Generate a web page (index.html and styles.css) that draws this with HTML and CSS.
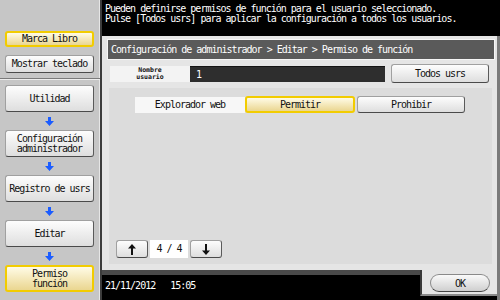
FILE: index.html
```html
<!DOCTYPE html>
<html lang="es">
<head>
    <meta charset="UTF-8">
    <title>Permiso de función</title>
    <link rel="stylesheet" href="styles.css">
</head>
<body>
    <div class="screen">
        <div class="sidebar">
            <div class="side-top">
                <div class="btn btn-yellow short">Marca Libro</div>
                <div class="btn short second">Mostrar teclado</div>
            </div>
            <div class="flow">
                <div class="btn nav">Utilidad</div>
                <div class="flow-arrow"><svg width="9" height="9" viewBox="0 0 9 9"><path d="M3 0h3v4h3L4.5 9 0 4h3z" fill="#1b5cff"/></svg></div>
                <div class="btn nav">Configuración<br>administrador</div>
                <div class="flow-arrow"><svg width="9" height="9" viewBox="0 0 9 9"><path d="M3 0h3v4h3L4.5 9 0 4h3z" fill="#1b5cff"/></svg></div>
                <div class="btn nav">Registro de usrs</div>
                <div class="flow-arrow"><svg width="9" height="9" viewBox="0 0 9 9"><path d="M3 0h3v4h3L4.5 9 0 4h3z" fill="#1b5cff"/></svg></div>
                <div class="btn nav">Editar</div>
                <div class="flow-arrow"><svg width="9" height="9" viewBox="0 0 9 9"><path d="M3 0h3v4h3L4.5 9 0 4h3z" fill="#1b5cff"/></svg></div>
                <div class="btn btn-yellow nav">Permiso<br>función</div>
            </div>
        </div>

        <div class="main">
            <div class="message">
                Pueden definirse permisos de función para el usuario seleccionado.<br>
                Pulse [Todos usrs] para aplicar la configuración a todos los usuarios.
            </div>

            <div class="frame">
                <div class="frame-body">
                    <div class="title-bar">Configuración de administrador &gt; Editar &gt; Permiso de función</div>

                    <div class="name-row">
                        <div class="name-label">Nombre<br>usuario</div>
                        <div class="name-field">1</div>
                        <div class="btn all-btn">Todos usrs</div>
                    </div>

                    <div class="content">
                        <div class="perm-row">
                            <div class="perm-label">Explorador web</div>
                            <div class="btn btn-yellow choice">Permitir</div>
                            <div class="btn choice deny">Prohibir</div>
                        </div>

                        <div class="pager">
                            <div class="btn page-btn">
                                <svg width="10" height="11" viewBox="0 0 10 11"><path d="M4 11V4.5H1L5 0l4 4.5H6V11z" fill="#111"/></svg>
                            </div>
                            <div class="page-count">4 / 4</div>
                            <div class="btn page-btn">
                                <svg width="10" height="11" viewBox="0 0 10 11"><path d="M4 0v6.5H1L5 11l4-4.5H6V0z" fill="#111"/></svg>
                            </div>
                        </div>
                    </div>
                </div>

                <div class="bottom-row">
                    <div class="status">21/11/2012&nbsp;&nbsp;&nbsp;15:05</div>
                    <div class="ok-area">
                        <div class="ok-btn">OK</div>
                    </div>
                </div>
            </div>
        </div>
    </div>
</body>
</html>
```

FILE: styles.css
```css
* {
    margin: 0;
    padding: 0;
    box-sizing: border-box;
}

body {
    font-family: "DejaVu Sans Mono", "Liberation Mono", monospace;
    font-size: 10px;
    line-height: 10px;
    letter-spacing: -1px;
    color: #111;
    background-color: #000;
}

.screen {
    display: flex;
    width: 500px;
    height: 300px;
}

/* left column */
.sidebar {
    width: 102px;
    height: 300px;
    background-color: #c6c6c6;
    border-right: 2px solid #3c3c3c;
    box-shadow: inset -1px 0 #e6e6e6;
}

.side-top {
    padding: 31px 6px 5px 5px;
    border-bottom: 1px solid #7a7a7a;
    box-shadow: 0 1px #ececec;
}

.btn {
    display: flex;
    align-items: center;
    justify-content: center;
    text-align: center;
    background: linear-gradient(#fdfdfd, #dedede);
    border: 1px solid #a0a0a0;
    border-right-color: #5a5a5a;
    border-bottom-color: #4a4a4a;
    border-radius: 3px;
}

.btn-yellow {
    background: linear-gradient(#fffbe6, #ead690);
    border: 2px solid #f2cc00;
}

.short {
    height: 16px;
}

.short.second {
    height: 18px;
    margin-top: 8px;
}

.flow {
    display: flex;
    flex-direction: column;
    padding: 6px 6px 0 5px;
}

.nav {
    height: 27px;
}

.flow-arrow {
    height: 18px;
    display: flex;
    align-items: center;
    justify-content: center;
}

/* right column */
.main {
    flex: 1;
    display: flex;
    flex-direction: column;
}

.message {
    height: 36px;
    padding: 4px 3px 0;
    color: #fff;
}

.frame {
    flex: 1;
    display: flex;
    flex-direction: column;
    background-color: #e5e5e5;
    border-right: 3px solid #7a7a7a;
}

.frame-body {
    flex: 1;
    display: flex;
    flex-direction: column;
    padding: 3px 2px 6px 5px;
}

.title-bar {
    height: 21px;
    padding: 5px 3px 0;
    color: #fff;
    background-color: #5a5a5a;
    border: 1px solid #f6f6f6;
}

.name-row {
    display: flex;
    align-items: center;
    height: 19px;
    margin-top: 4px;
    padding-left: 3px;
}

.name-label {
    width: 80px;
    height: 16px;
    padding-top: 1px;
    font-size: 6.5px;
    line-height: 7px;
    font-weight: bold;
    letter-spacing: 0;
    text-align: center;
    background-color: #f3f3f3;
}

.name-field {
    width: 195px;
    height: 16px;
    padding: 3px 6px 0;
    color: #fff;
    background-color: #2e2e2e;
    border-top: 1px solid #141414;
}

.all-btn {
    width: 98px;
    height: 19px;
    margin-left: 6px;
}

.content {
    flex: 1;
    display: flex;
    flex-direction: column;
    margin: 5px 3px 0 2px;
    padding: 8px 0 6px 26px;
    background-color: #dcdcdc;
}

.perm-row {
    display: flex;
    align-items: center;
}

.perm-label {
    width: 110px;
    height: 16px;
    padding-top: 3px;
    text-align: center;
    background-color: #f7f7f7;
}

.choice {
    width: 110px;
    height: 17px;
}

.deny {
    width: 108px;
    margin-left: 2px;
}

.pager {
    display: flex;
    margin-top: auto;
    margin-left: -19px;
}

.page-btn {
    width: 32px;
    height: 18px;
}

.page-count {
    width: 38px;
    height: 18px;
    margin: 0 2px;
    padding-top: 4px;
    text-align: center;
    background-color: #fff;
}

.bottom-row {
    display: flex;
    height: 30px;
    background-color: #000;
}

.status {
    flex: 1;
    padding: 6px 3px 0;
    color: #fff;
    border-top: 5px solid #4a4a4a;
}

.ok-area {
    width: 77px;
    height: 26px;
    padding: 4px 0 0 8px;
    background-color: #e5e5e5;
    border-left: 2px solid #3a3a3a;
    border-bottom: 2px solid #8a8a8a;
}

.ok-btn {
    width: 60px;
    height: 18px;
    padding-top: 4px;
    text-align: center;
    background: linear-gradient(#fafafa, #cfcfcf);
    border: 1px solid #8a8a8a;
    border-bottom-color: #444;
    border-radius: 9px;
}
```
